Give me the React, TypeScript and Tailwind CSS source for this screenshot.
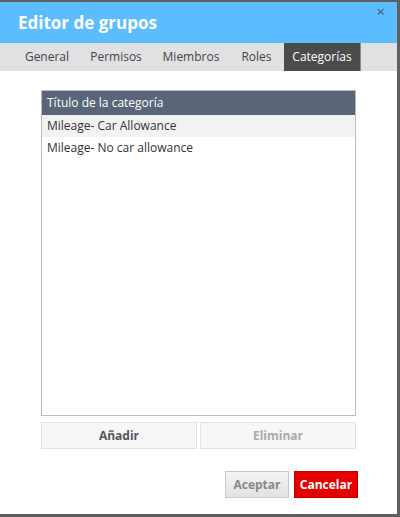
import React from 'react';

const tabs = [
  { name: 'General', w: 'w-[66px]' },
  { name: 'Permisos', w: 'w-[72px]' },
  { name: 'Miembros', w: 'w-[78px]' },
  { name: 'Roles', w: 'w-[53px]' },
  { name: 'Categorías', w: 'w-[77px]' },
];
const rows = ['Mileage- Car Allowance', 'Mileage- No car allowance'];

const App = () => {
  return (
    <div
      className="w-[400px] h-[517px] bg-white flex flex-col border-t-2 border-r-[3px] border-b-[3px] border-[#5f5f5f] text-[#333]"
      style={{ fontFamily: '"Open Sans", "Noto Sans", sans-serif' }}
    >
      <div className="relative h-[41px] bg-[#5bbcfe] flex items-center pl-[18px]">
        <h1 className="text-[17px] font-bold text-white leading-none">Editor de grupos</h1>
        <span className="absolute right-[12px] top-[2px] text-[#4a5a6a] text-[15px] leading-none">×</span>
      </div>
      <div className="h-[28px] bg-[#e1e1e3] flex items-stretch pl-[14px]">
        {tabs.map((tab) => (
          <div
            key={tab.name}
            className={
              tab.name === 'Categorías'
                ? `${tab.w} ml-[1px] flex items-center justify-center text-[12px] bg-[#4b4b4b] text-white border-r border-[#8a8a8a]`
                : `${tab.w} flex items-center justify-center text-[12px] text-[#444]`
            }
          >
            {tab.name}
          </div>
        ))}
      </div>
      <div className="flex-1 flex flex-col px-[41px] pt-[19px]">
        <div className="h-[326px] border border-[#b8bcc4] flex flex-col">
          <div className="h-[24px] bg-[#5a6579] text-white text-[12px] flex items-center px-[5px]">
            Título de la categoría
          </div>
          {rows.map((row, i) => (
            <div
              key={row}
              className={
                i === 0
                  ? 'h-[22px] bg-[#f2f2f2] text-[12px] flex items-center px-[5px] text-[#333]'
                  : 'h-[22px] bg-white text-[12px] flex items-center px-[5px] text-[#333]'
              }
            >
              {row}
            </div>
          ))}
        </div>
        <div className="flex gap-[3px] mt-[6px]">
          <button className="flex-1 h-[27px] border border-[#e2e2e2] bg-[#f7f7f7] text-[12px] font-bold text-[#555]">
            Añadir
          </button>
          <button className="flex-1 h-[27px] border border-[#e2e2e2] bg-[#f7f7f7] text-[12px] font-bold text-[#aaa]">
            Eliminar
          </button>
        </div>
        <div className="flex justify-end gap-[5px] mt-[22px] -mr-[2px]">
          <button className="w-[64px] h-[27px] border border-[#c8c8c8] bg-gradient-to-b from-[#f4f4f4] to-[#e2e2e2] text-[12px] font-bold text-[#888]">
            Aceptar
          </button>
          <button className="w-[64px] h-[27px] border border-[#c00000] bg-[#e60000] text-[12px] font-bold text-white">
            Cancelar
          </button>
        </div>
      </div>
    </div>
  );
};

export default App;
